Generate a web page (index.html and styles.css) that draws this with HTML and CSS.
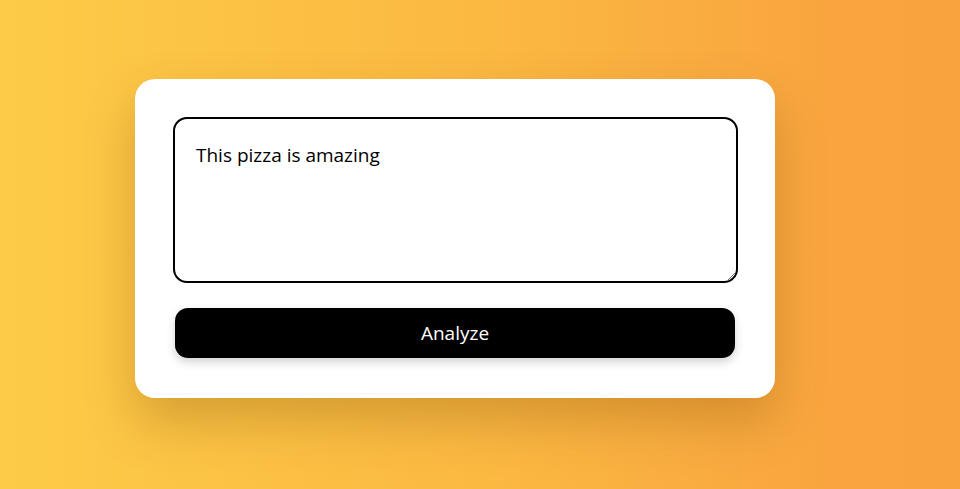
FILE: index.html
```html
<!DOCTYPE html>
<html lang="en">
<head>
<meta charset="utf-8">
<title>Sentiment</title>
<link rel="stylesheet" href="styles.css">
</head>
<body>
<main class="page">
  <section class="card">
    <textarea class="input">This pizza is amazing</textarea>
    <button class="analyze" type="button">Analyze</button>
  </section>
</main>
</body>
</html>
```
FILE: styles.css
```css
* { box-sizing: border-box; }
html, body { margin: 0; height: 100%; }
body {
  font-family: "Open Sans", "Noto Sans", sans-serif;
  background: linear-gradient(90deg, #fdcb47 0%, #fbb942 50%, #f9a43e 88%, #f9a33e 100%);
}
.page {
  height: 100%;
  display: flex;
  align-items: flex-start;
  padding: 79px 0 0 135px;
}
.card {
  width: 640px;
  height: 319px;
  background: #fff;
  border-radius: 20px;
  padding: 38px 40px 40px;
  display: flex;
  flex-direction: column;
  gap: 25px;
  box-shadow: 0 24px 50px rgba(120, 70, 0, 0.28);
}
.input {
  flex: none;
  width: 565px;
  height: 166px;
  margin: 0 -3px 0 -2px;
  border: 2px solid #000;
  border-radius: 14px;
  padding: 23px 21px;
  font-family: inherit;
  font-size: 19px;
  line-height: 1.4;
  color: #000;
  resize: vertical;
  outline: none;
}
.analyze {
  flex: none;
  width: 560px;
  height: 50px;
  border: none;
  border-radius: 13px;
  background: #000;
  color: #fff;
  font-family: inherit;
  font-size: 19px;
  box-shadow: 0 4px 10px rgba(0, 0, 0, 0.18);
  cursor: pointer;
}
```
